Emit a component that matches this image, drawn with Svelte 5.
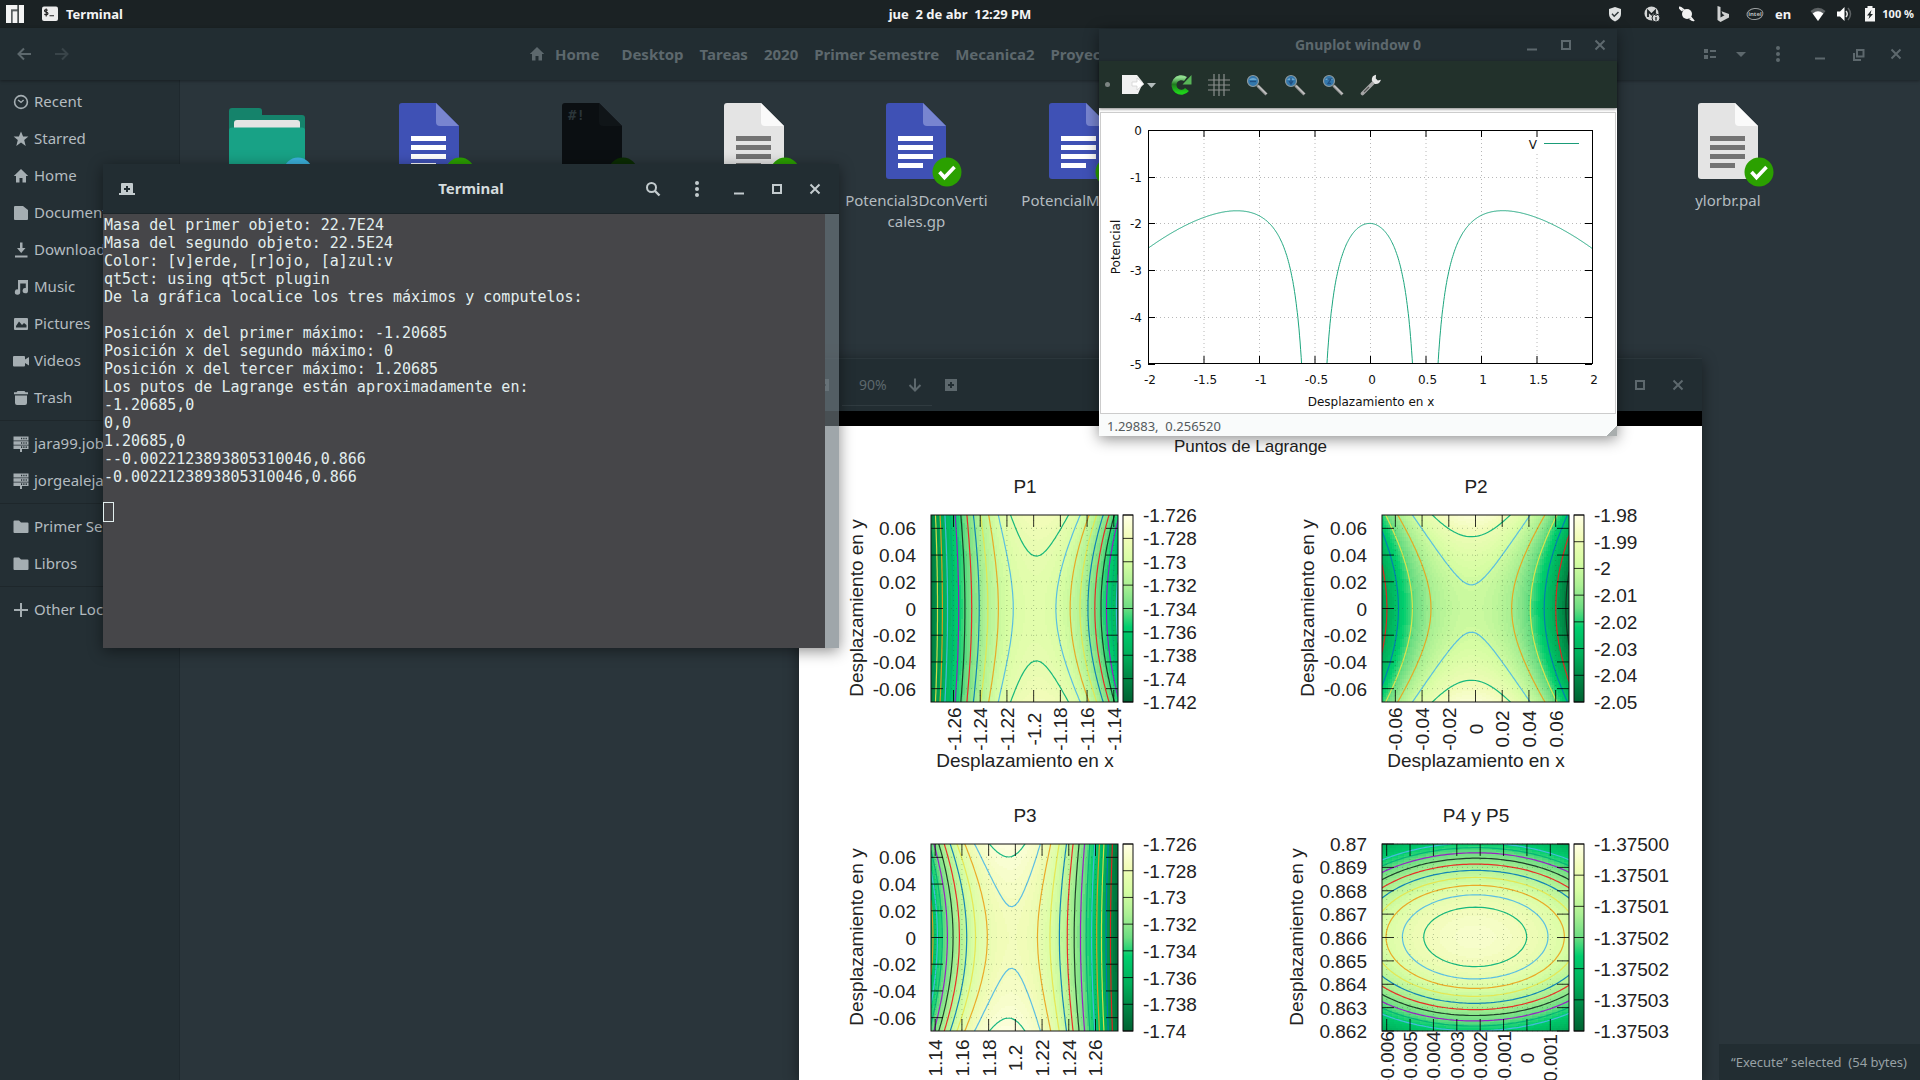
<script>
  const crumbs = ['Desktop', 'Tareas', '2020', 'Primer Semestre', 'Mecanica2', 'Proyecto'];

  const places = [
    [
      { icon: 'clock', name: 'Recent' },
      { icon: 'star', name: 'Starred' },
      { icon: 'home', name: 'Home' },
      { icon: 'document', name: 'Documents' },
      { icon: 'download', name: 'Downloads' },
      { icon: 'music', name: 'Music' },
      { icon: 'picture', name: 'Pictures' },
      { icon: 'video', name: 'Videos' },
      { icon: 'trash', name: 'Trash' }
    ],
    [
      { icon: 'server', name: 'jara99.job' },
      { icon: 'server', name: 'jorgealejandro' }
    ],
    [
      { icon: 'folder', name: 'Primer Semestre' },
      { icon: 'folder', name: 'Libros' }
    ],
    [{ icon: 'plus', name: 'Other Locations' }]
  ];

  const files = [
    { kind: 'folder', name: '' },
    { kind: 'blue', name: '' },
    { kind: 'script', name: '' },
    { kind: 'white', name: '' },
    { kind: 'blue', name: 'Potencial3DconVerticales.gp' },
    { kind: 'blue', name: 'PotencialMat.gp' },
    { kind: 'white', name: 'ylorbr.pal', last: true }
  ];

  const output = `Masa del primer objeto: 22.7E24
Masa del segundo objeto: 22.5E24
Color: [v]erde, [r]ojo, [a]zul:v
qt5ct: using qt5ct plugin
De la gráfica localice los tres máximos y computelos:

Posición x del primer máximo: -1.20685
Posición x del segundo máximo: 0
Posición x del tercer máximo: 1.20685
Los putos de Lagrange están aproximadamente en:
-1.20685,0
0,0
1.20685,0
--0.0022123893805310046,0.866
-0.0022123893805310046,0.866
`;

  // Effective potential of the rotating two-body system.
  const mu = 0.5022124;
  function potential(x, y) {
    const r1 = Math.hypot(x + mu, y);
    const r2 = Math.hypot(x - 1 + mu, y);
    return -(1 - mu) / r1 - mu / r2 - (x * x + y * y) / 2;
  }

  // One-dimensional plot: 111 px per unit in x, 46.7 px per unit in y.
  const px = (x) => 48 + (x + 2) * 111;
  const py = (v) => 17 - v * 46.7;
  let curve = '';
  let pen = false;
  for (let i = 0; i <= 800; i++) {
    const x = -2 + i / 200;
    const v = potential(x, 0);
    if (v > -6) {
      curve += `${pen ? 'L' : 'M'}${px(x).toFixed(1)} ${py(v).toFixed(1)}`;
      pen = true;
    } else pen = false;
  }
  const xTicks = [-2, -1.5, -1, -0.5, 0, 0.5, 1, 1.5, 2];
  const yTicks = [0, -1, -2, -3, -4, -5];

  // Colour ramp of the maps, from high to low potential.
  const ramp = [
    [0, 255, 255, 229],
    [0.125, 241, 252, 184],
    [0.25, 214, 253, 163],
    [0.375, 172, 240, 148],
    [0.5, 108, 221, 130],
    [0.6, 0, 206, 110],
    [0.75, 0, 175, 90],
    [0.875, 0, 133, 68],
    [1, 0, 98, 50]
  ];
  function shade(t) {
    t = Math.max(0, Math.min(1, t));
    let i = 1;
    while (i < ramp.length - 1 && ramp[i][0] < t) i++;
    const a = ramp[i - 1];
    const b = ramp[i];
    const k = (t - a[0]) / (b[0] - a[0]);
    return `rgb(${[1, 2, 3].map((c) => Math.round(a[c] + (b[c] - a[c]) * k)).join(',')})`;
  }
  const stops = ramp.map(([o]) => ({ o, c: shade(o) }));

  const SIZE = 187;
  const lineColors = ['#00b078', '#4db8e8', '#eba11a', '#e8e44a', '#0079b8', '#f01c1c', '#153020', '#9b10c8'];

  // Row runs of equal shade, one path per shade.
  function heat(m) {
    const cell = 2;
    const shades = 56;
    const paths = Array(shades + 1).fill('');
    for (let j = 0; j < SIZE; j += cell) {
      let start = 0;
      let last = -1;
      for (let i = 0; i <= SIZE + 1; i += cell) {
        const x = m.x0 + ((i + 1) / SIZE) * m.span;
        const y = m.y0 + m.span * (1 - (j + 1) / SIZE);
        const t = (m.hi - potential(x, y)) / (m.hi - m.lo);
        const q = i >= SIZE ? -2 : Math.round(Math.max(0, Math.min(1, t)) * shades);
        if (q !== last) {
          if (last >= 0) paths[last] += `M${start} ${j}H${Math.min(i, SIZE)}V${Math.min(j + cell, SIZE)}H${start}Z`;
          start = i;
          last = q;
        }
      }
    }
    return paths.map((d, q) => ({ d, c: shade(q / shades) })).filter((p) => p.d);
  }

  // Marching squares on a regular grid.
  function isoline(m, level) {
    const n = 60;
    const h = SIZE / n;
    const v = [];
    for (let j = 0; j <= n; j++) {
      v.push([]);
      for (let i = 0; i <= n; i++) v[j].push(potential(m.x0 + (i / n) * m.span, m.y0 + m.span * (1 - j / n)) - level);
    }
    let d = '';
    for (let j = 0; j < n; j++)
      for (let i = 0; i < n; i++) {
        const a = v[j][i], b = v[j][i + 1], c = v[j + 1][i + 1], e = v[j + 1][i];
        const pts = [];
        if (a > 0 !== b > 0) pts.push([i + a / (a - b), j]);
        if (b > 0 !== c > 0) pts.push([i + 1, j + b / (b - c)]);
        if (e > 0 !== c > 0) pts.push([i + e / (e - c), j + 1]);
        if (a > 0 !== e > 0) pts.push([i, j + a / (a - e)]);
        for (let k = 0; k + 1 < pts.length; k += 2)
          d += `M${(pts[k][0] * h).toFixed(1)} ${(pts[k][1] * h).toFixed(1)}L${(pts[k + 1][0] * h).toFixed(1)} ${(pts[k + 1][1] * h).toFixed(1)}`;
      }
    return d;
  }

  function build(m) {
    const base = potential(m.cx, m.cy);
    const lines = [];
    for (let k = 0; k < m.count; k++) {
      const d = isoline(m, base + m.first - k * m.step);
      if (d) lines.push({ d, c: lineColors[k % 8] });
    }
    return {
      ...m,
      cells: heat(m),
      lines,
      xt: m.xl.map(([v, label]) => ({ p: ((v - m.x0) / m.span) * SIZE, label })),
      yt: m.yl.map(([v, label]) => ({ p: SIZE - ((v - m.y0) / m.span) * SIZE, label })),
      ct: m.bar.map((label, i) => ({ p: (i / (m.bar.length - 1)) * SIZE, label }))
    };
  }

  const sym = [0.06, 0.04, 0.02, 0, -0.02, -0.04, -0.06].map((v) => [v, v === 0 ? '0' : v.toFixed(2)]);
  const maps = [
    build({
      title: 'P1', x0: -1.27685, y0: -0.07, span: 0.14, hi: -1.726, lo: -1.742,
      cx: -1.197, cy: 0, first: 0.00045, step: 0.00097, count: 12, ylabelX: -68, yl: sym,
      xl: [[-1.26, '-1.26'], [-1.24, '-1.24'], [-1.22, '-1.22'], [-1.2, '-1.2'], [-1.18, '-1.18'], [-1.16, '-1.16'], [-1.14, '-1.14']],
      bar: ['-1.726', '-1.728', '-1.73', '-1.732', '-1.734', '-1.736', '-1.738', '-1.74', '-1.742']
    }),
    build({
      title: 'P2', x0: -0.07, y0: -0.07, span: 0.14, hi: -1.98, lo: -2.05,
      cx: -0.0033, cy: 0, first: 0.01, step: 0.0089, count: 7, ylabelX: -68, yl: sym,
      xl: [...sym].reverse(),
      bar: ['-1.98', '-1.99', '-2', '-2.01', '-2.02', '-2.03', '-2.04', '-2.05']
    }),
    build({
      title: 'P3', x0: 1.13685, y0: -0.07, span: 0.14, hi: -1.726, lo: -1.74,
      cx: 1.198, cy: 0, first: 0.00103, step: 0.00088, count: 14, ylabelX: -68, yl: sym,
      xl: [[1.14, '1.14'], [1.16, '1.16'], [1.18, '1.18'], [1.2, '1.2'], [1.22, '1.22'], [1.24, '1.24'], [1.26, '1.26']],
      bar: ['-1.726', '-1.728', '-1.73', '-1.732', '-1.734', '-1.736', '-1.738', '-1.74']
    }),
    build({
      title: 'P4 y P5', x0: -0.0062, y0: 0.862, span: 0.008, hi: -1.375, lo: -1.375034,
      cx: -0.0022124, cy: 0.8660254, first: -0.00000182, step: 0.00000182, count: 10, ylabelX: -79,
      yl: [0.87, 0.869, 0.868, 0.867, 0.866, 0.865, 0.864, 0.863, 0.862].map((v) => [v, String(v)]),
      xl: [-0.006, -0.005, -0.004, -0.003, -0.002, -0.001, 0, 0.001].map((v) => [v, String(v)]),
      bar: ['-1.37500', '-1.37501', '-1.37501', '-1.37502', '-1.37502', '-1.37503', '-1.37503']
    })
  ];
</script>

{#snippet glyph(name)}
  <svg class="glyph" viewBox="0 0 16 16" aria-hidden="true">
    {#if name === 'clock'}
      <circle cx="8" cy="8" r="6.4" fill="none" stroke="currentColor" stroke-width="1.6" />
      <path d="M5 6l3 2.4L10.6 6" fill="none" stroke="currentColor" stroke-width="1.4" />
    {:else if name === 'star'}
      <path d="M8 .6l2.1 5h5.3l-4.2 3.5 1.5 5.9L8 11.6 3.300 15l1.500-5.900L.6 5.600h5.300z" />
    {:else if name === 'home'}
      <path d="M8 1L.8 8H3v6.500h3.500V10h3v4.500H13V8h2.200z" />
    {:else if name === 'document'}
      <path d="M2 1h8l5 4v9a1 1 0 0 1-1 1H2a1 1 0 0 1-1-1V2a1 1 0 0 1 1-1z" />
    {:else if name === 'download'}
      <path d="M7 .5h2.500V6h3L8.200 11 4 6h3zM2 13.500h12.500v2H2z" />
    {:else if name === 'music'}
      <path d="M5 1h10v10.500A2.700 2.700 0 1 1 12.800 9V4.500H7.200V13A2.700 2.700 0 1 1 5 10.400z" />
    {:else if name === 'picture'}
      <path fill-rule="evenodd" d="M2 2h12a1 1 0 0 1 1 1v10a1 1 0 0 1-1 1H2a1 1 0 0 1-1-1V3a1 1 0 0 1 1-1zm1 9.500h10.500V9L11 7 9 9 6 5.500 3 10z" />
    {:else if name === 'video'}
      <path d="M1 3h10a1 1 0 0 1 1 1v2.500L16 4v8.500L12 10v2.500a1 1 0 0 1-1 1H1a1 1 0 0 1-1-1V4a1 1 0 0 1 1-1z" />
    {:else if name === 'trash'}
      <path d="M4.500 1h7l1 1.200H15v2H1v-2h2.500zM2 5.500h12V13a2 2 0 0 1-2 2H4a2 2 0 0 1-2-2z" />
    {:else if name === 'server'}
      <path d="M.5 .5h15v4H.5zM.5 5.200h15v3.600H.5zM.5 9.500h15v3.500H9v3H7v-3H.5z" />
      <path d="M8 2.500h1.200M10.300 2.500h1.200M12.600 2.500h1.200M8 7h1.200M10.300 7h1.200M12.600 7h1.200M8 11.200h1.200M10.300 11.200h1.200M12.600 11.200h1.200" stroke="#242f34" stroke-width="1.700" />
    {:else if name === 'folder'}
      <path d="M1.500 1.500H6L8 3.500h6.500a1 1 0 0 1 1 1V13a1 1 0 0 1-1 1h-13a1 1 0 0 1-1-1V2.500a1 1 0 0 1 1-1z" />
    {:else if name === 'plus'}
      <path d="M7 1h2v6h6v2H9v6H7V9H1V7h6z" />
    {:else if name === 'back'}
      <path d="M8 2.500L2.500 8 8 13.500M3 8h12" fill="none" stroke="currentColor" stroke-width="2" />
    {:else if name === 'forward'}
      <path d="M8 2.500L13.500 8 8 13.500M13 8H1" fill="none" stroke="currentColor" stroke-width="2" />
    {:else if name === 'down'}
      <path d="M2.500 8L8 13.500 13.500 8M8 13V1.500" fill="none" stroke="currentColor" stroke-width="2" />
    {:else if name === 'minimize'}
      <path d="M3 11.500h10v2H3z" />
    {:else if name === 'maximize'}
      <path d="M4 4h8v8H4z" fill="none" stroke="currentColor" stroke-width="2" />
    {:else if name === 'restore'}
      <path d="M7 4h6.500v6.500H7zM4 7v7h7" fill="none" stroke="currentColor" stroke-width="2" />
    {:else if name === 'close'}
      <path d="M3.500 3.500l9 9M12.500 3.500l-9 9" fill="none" stroke="currentColor" stroke-width="2" />
    {:else if name === 'dots'}
      <circle cx="8" cy="2" r="2" /><circle cx="8" cy="8" r="2" /><circle cx="8" cy="14" r="2" />
    {:else if name === 'triangle'}
      <path d="M3 6h10L8 11z" />
    {:else if name === 'list'}
      <path d="M2 3h4v4H2zM2 9h4v4H2zM8 4h6v2H8zM8 10h6v2H8z" />
    {:else if name === 'search'}
      <circle cx="6.500" cy="6.500" r="4.500" fill="none" stroke="currentColor" stroke-width="2" />
      <path d="M10 10l4.500 4.500" stroke="currentColor" stroke-width="2.400" />
    {:else if name === 'newtab'}
      <path fill-rule="evenodd" d="M3 2h10a1 1 0 0 1 1 1v9h2v2H0v-2h2V3a1 1 0 0 1 1-1zm4 3v2H5v2h2v2h2V9h2V7H9V5z" />
    {:else if name === 'zoomin'}
      <path fill-rule="evenodd" d="M2 2h12v12H2zm5 3v2H5v2h2v2h2V9h2V7H9V5z" />
    {:else if name === 'zoomout'}
      <path fill-rule="evenodd" d="M2 2h12v12H2zm3 5v2h6V7z" />
    {/if}
  </svg>
{/snippet}

{#snippet button(name, label)}
  <button type="button" aria-label={label}>{@render glyph(name)}</button>
{/snippet}

<div class="desktop">
  <header class="panel">
    <div class="panel-left">
      <svg class="manjaro" viewBox="0 0 18 18" aria-hidden="true">
        <path d="M0 0h11.500v4.500H5V18H0zM6.500 6.200h5V18h-5zM13 0h5v18h-5z" fill="#f4f4f4" />
        <path d="M5 5h6.500v1H6v12H5zM11.700 0h1v18h-1z" fill="#5a6062" />
      </svg>
      <svg class="termicon" viewBox="0 0 16 16" aria-hidden="true">
        <rect y=".5" width="16" height="14.500" rx="2" fill="#ececec" />
        <path d="M5.800 4.200Q2.500 3.200 2.500 4.800 2.500 5.800 4.200 6.100 6 6.500 6 7.600 6 9.200 2.300 8.400M4.200 2.400v8M7.500 9.800h4.500" stroke="#222" stroke-width="1.100" fill="none" />
      </svg>
      <strong>Terminal</strong>
    </div>
    <strong class="clock">jue&nbsp; 2 de abr&nbsp; 12:29 PM</strong>
    <div class="tray">
      <svg class="shield" viewBox="0 0 16 16"><path d="M8 1l6 2v5q0 5-6 7.500Q2 13 2 8V3z" fill="#dfe2e2" /><path d="M5 7.800l2.200 2.400L11.500 6" stroke="#30383a" stroke-width="1.500" fill="none" /></svg>
      <svg class="mega" viewBox="0 0 16 16"><circle cx="7.500" cy="7.500" r="7" fill="#d4d6d6" /><path d="M4 11V5l3.500 3.500L11 5v3" stroke="#1b2224" stroke-width="1.800" fill="none" /><circle cx="12" cy="12" r="4" fill="#d4d6d6" stroke="#1b2224" /><path d="M12 11v3.500M12 9v1" stroke="#1b2224" stroke-width="1.300" /></svg>
      <svg class="planet" viewBox="0 0 16 16"><circle cx="8" cy="8" r="5" fill="#f2f2f2" /><path d="M3.500 5Q-.5 1.500 .8 1.200 3 1.500 8 7t6.500 7.500q-1 .5-4-2" fill="none" stroke="#f2f2f2" stroke-width="1.600" /></svg>
      <svg class="bing" viewBox="0 0 16 16"><path d="M2.500 0l3 1v10.500l4-2.300L7.500 8 6.500 5.200 14 8v3.500L5.500 16l-3-2z" fill="#cfd1d1" /></svg>
      <svg class="intel" viewBox="0 0 18 14"><ellipse cx="9" cy="7" rx="8" ry="5.500" transform="rotate(-8 9 7)" fill="none" stroke="#9a9e9f" /><text x="9" y="9" text-anchor="middle" font-size="6" font-weight="700" fill="#b9bcbd">intel</text></svg>
      <strong class="lang">en</strong>
      <svg class="wifi" viewBox="0 0 16 16"><path d="M8 15L.5 5Q8-1.500 15.500 5z" fill="#5c6163" /><path d="M8 15L2.700 7.500Q8 3 13.300 7.500z" fill="#fff" /></svg>
      <svg class="volume" viewBox="0 0 16 16"><path d="M1 5.500h3L8.500 1v14L4 10.500H1z" fill="#fff" /><path d="M10 5q2.500 3 0 6" stroke="#ddd" stroke-width="1.500" fill="none" /><path d="M12 2q5 6 0 12" stroke="#5c6163" stroke-width="1.500" fill="none" /></svg>
      <svg class="battery" viewBox="0 0 12 16"><path d="M3.500 0h5v2H11v13.500H1V2h2.500z" fill="#f4f4f4" /><path d="M7.500 4L3 9.500h2.500L4.500 13 9 8H6.500z" fill="#1b2224" /></svg>
      <strong class="percent">100 %</strong>
    </div>
  </header>

  <main class="files">
    <header class="bar">
      <div class="nav">
        {@render button('back', 'Back')}
        <span class="faint">{@render button('forward', 'Forward')}</span>
      </div>
      <nav class="crumbs" aria-label="Path">
        <a class="crumb-home" href="#home">{@render glyph('home')}Home</a>
        {#each crumbs as c}<a href="#{c}">{c}</a>{/each}
      </nav>
      <div class="tools">
        {@render button('list', 'View')}
        {@render button('triangle', 'View options')}
        <span class="menu">{@render button('dots', 'Menu')}</span>
      </div>
      <div class="controls">
        {@render button('minimize', 'Minimize')}
        {@render button('restore', 'Restore')}
        {@render button('close', 'Close')}
      </div>
    </header>
    <div class="split">
      <nav class="sidebar" aria-label="Places">
        {#each places as group}
          <ul>
            {#each group as p}
              <li><a href="#{p.name}">{@render glyph(p.icon)}<span>{p.name}</span></a></li>
            {/each}
          </ul>
        {/each}
      </nav>
      <section class="content">
        <ul class="grid">
          {#each files as f}
            <li class:last={f.last}>
              <span class="thumb">
                {#if f.kind === 'folder'}
                  <svg class="folder" viewBox="0 0 76 76" aria-hidden="true">
                    <path d="M3 5h27q3 0 3 3v4h40q3 0 3 3v50H0V8q0-3 3-3z" fill="#15836b" />
                    <path d="M5 40V20q0-3 3-3h60q3 0 3 3v20z" fill="#e4e4e4" />
                    <path d="M3 24.500h70q3 0 3 3V70q0 3-3 3H3q-3 0-3-3V27.500q0-3 3-3z" fill="#18a286" />
                  </svg>
                {:else}
                  <svg class="doc {f.kind}" viewBox="0 0 60 76" aria-hidden="true">
                    <path class="sheet" d="M3 0h34l23 23v50q0 3-3 3H3q-3 0-3-3V3q0-3 3-3z" />
                    <path class="fold" d="M37 0l23 23H41q-4 0-4-4z" />
                    {#if f.kind === 'script'}
                      <text x="6" y="17" font-size="14">#!</text>
                    {:else}
                      <path class="rows" d="M12 33h35v5H12zM12 42h35v5H12zM12 51h35v5H12zM12 60h25v5H12z" />
                    {/if}
                  </svg>
                {/if}
                <svg class="emblem {f.kind}" viewBox="0 0 30 30" aria-hidden="true">
                  <circle cx="15" cy="15" r="14.500" />
                  <path d="M7.500 15l5 5.500L22.500 10" fill="none" stroke="#fff" stroke-width="3.600" />
                </svg>
              </span>
              <span class="name">{f.name}</span>
            </li>
          {/each}
        </ul>
        <p class="status">“Execute” selected&nbsp; (54 bytes)</p>
      </section>
    </div>
  </main>

  <section class="window viewer" aria-label="Document viewer">
    <header class="viewer-bar">
      <div class="zoom">
        {@render button('zoomout', 'Zoom out')}
        <span class="level"><input type="text" value="90%" aria-label="Zoom level" />{@render button('down', 'Zoom levels')}</span>
        {@render button('zoomin', 'Zoom in')}
      </div>
      <div class="controls">
        {@render button('minimize', 'Minimize')}
        {@render button('maximize', 'Maximize')}
        {@render button('close', 'Close')}
      </div>
    </header>
    <div class="page">
      <h2>Puntos de Lagrange</h2>
      <div class="plots">
        {#each maps as m, n}
          <svg class="map" viewBox="0 0 451 329" role="img" aria-label={m.title}>
            <defs>
              <linearGradient id="ramp{n}" x1="0" y1="0" x2="0" y2="1">
                {#each stops as s}<stop offset={s.o} stop-color={s.c} />{/each}
              </linearGradient>
              <clipPath id="clip{n}"><rect width={SIZE} height={SIZE} /></clipPath>
            </defs>
            <g transform="translate(132 52)">
              <text x="94" y="-22" text-anchor="middle">{m.title}</text>
              <g shape-rendering="crispEdges">
                {#each m.cells as c}<path d={c.d} fill={c.c} />{/each}
              </g>
              <g clip-path="url(#clip{n})" class="iso">
                {#each m.lines as l}<path d={l.d} stroke={l.c} />{/each}
              </g>
              {#each m.xt as t}
                <path class="dotted" d="M{t.p} 0V{SIZE}" />
                <path class="tick" d="M{t.p} 0v12M{t.p} {SIZE}v-12" />
                <text transform="translate({t.p + 7} {SIZE + 27}) rotate(-90)" text-anchor="middle">{t.label}</text>
              {/each}
              {#each m.yt as t}
                <path class="dotted" d="M0 {t.p}H{SIZE}" />
                <path class="tick" d="M0 {t.p}h12M{SIZE} {t.p}h-12" />
                <text x="-15" y={t.p + 7} text-anchor="end">{t.label}</text>
              {/each}
              <rect class="frame" width={SIZE} height={SIZE} />
              <rect class="frame" x="192" width="10" height={SIZE} style:fill="url(#ramp{n})" />
              {#each m.ct as t}
                <path class="tick" d="M192 {t.p}h10" />
                <text x="212" y={t.p + 7}>{t.label}</text>
              {/each}
              <text x="94" y="252" text-anchor="middle">Desplazamiento en x</text>
              <text transform="translate({m.ylabelX} 93) rotate(-90)" text-anchor="middle">Desplazamiento en y</text>
            </g>
          </svg>
        {/each}
      </div>
    </div>
  </section>

  <section class="window gnuplot" aria-label="Gnuplot">
    <header class="gnu-bar">
      <h1>Gnuplot window 0</h1>
      <div class="controls">
        {@render button('minimize', 'Minimize')}
        {@render button('maximize', 'Maximize')}
        {@render button('close', 'Close')}
      </div>
    </header>
    <div class="toolbar">
      <i class="handle"></i>
      <button type="button" class="export" aria-label="Export">
        <svg viewBox="0 0 34 22" aria-hidden="true"><path d="M0 1h15l6 7.500L16 20H0z" fill="#f1f1f1" /><path d="M10 8h5V4l7 6-7 6v-4h-5z" fill="#fff" stroke="#cfcfcf" stroke-width=".7" /><path d="M25 9h9l-4.500 5z" fill="#b4bcbc" /></svg>
      </button>
      <button type="button" aria-label="Replot">
        <svg viewBox="0 0 22 22" aria-hidden="true">
          <defs><linearGradient id="leaf" x1="0" y1="0" x2="0" y2="1"><stop offset="0" stop-color="#8fdc8f" /><stop offset=".45" stop-color="#1e7a1e" /><stop offset="1" stop-color="#1fd01a" /></linearGradient></defs>
          <path d="M17 15.500A7.300 7.300 0 1 1 15.500 5" fill="none" stroke="url(#leaf)" stroke-width="5" /><path d="M21.500 1v9.500h-9z" fill="#58b558" />
        </svg>
      </button>
      <button type="button" aria-label="Grid">
        <svg viewBox="0 0 22 22" aria-hidden="true"><path d="M6 0v22M11 0v22M16 0v22M0 6h22M0 11h22M0 16h22" stroke="#8b908e" stroke-width="1.200" /></svg>
      </button>
      {#each ['Previous zoom', 'Next zoom', 'Autoscale'] as label, i}
        <button type="button" aria-label={label}>
          <svg viewBox="0 0 22 22" aria-hidden="true">
            <path d="M11.500 11.500l9 9" stroke="#9b9b9b" stroke-width="3" /><path d="M12 11.500l8.500 8.500" stroke="#ddd" />
            <circle cx="7" cy="7" r="5.500" fill="#3478ac" stroke="#8d999d" stroke-width="1.200" />
            <path d="M3 6a4.500 3.500 0 0 1 8 0z" fill="#6ba6cf" />
            <path d={['M4 7.500h6', 'M7 4v6M5 7l2 3 2-3', 'M5.500 5h3.500L6 9.500h3'][i]} stroke="#1f4f80" stroke-width="1.300" fill="none" />
          </svg>
        </button>
      {/each}
      <button type="button" aria-label="Options">
        <svg viewBox="0 0 22 22" aria-hidden="true"><path d="M2.500 19.500L14 8" stroke="#a6a6a6" stroke-width="3.600" stroke-linecap="round" /><path d="M4 18l5-5" stroke="#555" stroke-width="1.200" /><path d="M16 .8q-4.500.8-4.200 5.700L15 10q4.500.5 6-4.200l-3.200.8-2-2z" fill="#e6e6e6" /></svg>
      </button>
    </div>
    <div class="canvas">
      <svg viewBox="1 0 514 300" role="img" aria-label="Potencial">
        <defs><clipPath id="plot-area"><rect x="48" y="17" width="445" height="234" /></clipPath></defs>
        {#each xTicks as t}
          {#if Math.abs(t) < 2}<path class="gdot" d="M{px(t) + 0.5} {t === 1.5 ? 41 : 18}V250" />{/if}
          <path class="gtick" d="M{px(t) + 0.5} 17v7M{px(t) + 0.5} 250v-7" />
          <text x={px(t) + 2} y="271" text-anchor="middle">{t}</text>
        {/each}
        {#each yTicks as t}
          {#if t < 0 && t > -5}<path class="gdot" d="M48 {Math.round(py(t)) + 0.5}H492" />{/if}
          <path class="gtick" d="M48 {Math.round(py(t)) + 0.5}h7M492 {Math.round(py(t)) + 0.5}h-7" />
          <text x="42" y={Math.round(py(t)) + 5} text-anchor="end">{t}</text>
        {/each}
        <path d={curve} clip-path="url(#plot-area)" fill="none" stroke="#1da67e" />
        <rect class="gframe" x="48.500" y="17.500" width="444" height="233" />
        <text x="437" y="36" text-anchor="end">V</text>
        <path d="M444 30.500h35" stroke="#1a9c78" />
        <text x="271" y="293" text-anchor="middle">Desplazamiento en x</text>
        <text transform="translate(20 134) rotate(-90)" text-anchor="middle">Potencial</text>
      </svg>
    </div>
    <footer>1.29883,&nbsp; 0.256520</footer>
  </section>

  <section class="window terminal" aria-label="Terminal">
    <header class="term-bar">
      <div class="side">{@render button('newtab', 'New tab')}</div>
      <h1>Terminal</h1>
      <div class="side right">
        {@render button('search', 'Search')}
        {@render button('dots', 'Menu')}
        <div class="controls">
          {@render button('minimize', 'Minimize')}
          {@render button('maximize', 'Maximize')}
          {@render button('close', 'Close')}
        </div>
      </div>
    </header>
    <div class="term-body">
      <div class="screen"><pre>{output}</pre><span class="cursor"></span></div>
      <div class="scroll"></div>
    </div>
  </section>
</div>

<style>
  :global(body) { margin: 0; background: #2a353b; }
  .desktop {
    position: relative;
    display: flex;
    flex-direction: column;
    height: 100vh;
    overflow: hidden;
    font: 15px/20px 'Noto Sans', sans-serif;
    color: #b4bcc0;
  }
  button { display: flex; padding: 0; border: 0; background: none; color: inherit; font: inherit; }
  a { color: inherit; text-decoration: none; }
  ul { margin: 0; padding: 0; list-style: none; }
  h1, h2, p, pre { margin: 0; font: inherit; }
  .glyph { display: block; width: 16px; height: 16px; fill: currentColor; flex: none; }
  .controls { display: flex; align-items: center; gap: 22px; }

  .panel {
    display: grid;
    grid-template-columns: 1fr auto 1fr;
    align-items: center;
    height: 28px;
    flex: none;
    padding: 0 6px;
    background: #1b2224;
    color: #f4f4f4;
    font-size: 13px;
  }
  .panel-left { display: flex; align-items: center; }
  .manjaro { width: 18px; height: 18px; margin-right: 18px; }
  .termicon { width: 16px; height: 16px; margin-right: 8px; }
  .tray { display: flex; align-items: center; justify-content: flex-end; }
  .tray svg { width: 16px; height: 16px; flex: none; }
  .shield { margin-right: 21px; }
  .mega { margin-right: 19px; }
  .planet { margin-right: 20px; }
  .bing { margin-right: 15px; }
  .tray .intel { width: 18px; height: 14px; margin-right: 11px; }
  .lang { margin-right: 19px; }
  .wifi { margin-right: 10px; }
  .volume { margin-right: 12px; }
  .tray .battery { width: 12px; margin-right: 6px; }
  .percent { font-size: 11px; }

  .files { display: flex; flex-direction: column; flex: 1; min-height: 0; isolation: isolate; }
  .bar {
    display: flex;
    align-items: center;
    height: 52px;
    flex: none;
    padding: 0 16px;
    background: #222d32;
    color: #5d686d;
    box-shadow: 0 1px 3px rgba(0, 0, 0, 0.35);
    z-index: 1;
  }
  .nav { display: flex; gap: 22px; width: 513px; flex: none; }
  .faint { opacity: 0.4; }
  .crumbs { display: flex; gap: 16px; flex: 1; min-width: 0; overflow: hidden; font-weight: 700; white-space: nowrap; }
  .crumb-home { display: flex; align-items: center; gap: 10px; margin-right: 6px; }
  .tools { display: flex; gap: 15px; margin-right: 26px; }
  .menu { padding-left: 6px; }
  .split { display: flex; flex: 1; min-height: 0; }
  .sidebar { width: 180px; box-sizing: border-box; flex: none; padding-top: 3px; background: #242f34; border-right: 1px solid #1f292e; }
  .sidebar ul + ul { margin-top: 4px; padding-top: 4px; border-top: 1px solid #1e272b; }
  .sidebar a { display: flex; align-items: center; gap: 5px; height: 37px; padding-left: 13px; white-space: nowrap; font-size: 15px; }
  .sidebar span { padding-bottom: 1px; }
  .sidebar a .glyph { color: #a5aeb2; }
  .content { display: flex; flex-direction: column; justify-content: space-between; flex: 1; min-width: 0; background: #2a353b; }
  .grid { display: grid; grid-template-columns: repeat(10, 1fr); padding: 23px 111px 0 6px; }
  .grid li { display: flex; flex-direction: column; align-items: center; gap: 11px; min-width: 0; }
  .grid .last { grid-column: 10; }
  .thumb { position: relative; display: flex; width: 76px; height: 76px; justify-content: center; }
  .folder { width: 76px; height: 76px; }
  .doc { width: 60px; height: 76px; }
  .blue .sheet { fill: #3f51b5; }
  .blue .fold { fill: #7885d0; }
  .blue .rows { fill: #fff; }
  .white .sheet { fill: #e4e4e4; }
  .white .fold { fill: #fafafa; }
  .white .rows { fill: #737373; }
  .script .sheet { fill: #0b0f12; }
  .script .fold { fill: #101518; }
  .doc text { fill: #2a3539; font-family: 'DejaVu Sans Mono', monospace; font-weight: 700; }
  .emblem { position: absolute; right: -8px; bottom: -8px; width: 30px; height: 30px; fill: #2ba000; }
  .emblem.folder { width: 30px; height: 30px; fill: #3cb2dd; }
  .emblem.script { fill: #0b2c03; }
  .name { width: 144px; text-align: center; line-height: 21px; font-size: 15px; overflow-wrap: anywhere; }
  .status { align-self: flex-end; padding: 8px 13px 8px 12px; background: #222d32; font-size: 13px; color: #98a1a5; }

  .window { position: absolute; display: flex; flex-direction: column; box-shadow: 0 3px 14px rgba(0, 0, 0, 0.45); }
  .window h1 { font-weight: 700; }
  .window > header { display: flex; align-items: center; flex: none; background: #222d32; color: #5d686d; }

  .viewer { left: 799px; top: 358px; width: 903px; bottom: 0; overflow: hidden; border-top: 1px solid #2b363b; box-sizing: border-box; }
  .viewer .viewer-bar { justify-content: space-between; height: 52px; padding: 0 16px; }
  .zoom { display: flex; align-items: center; gap: 11px; }
  .level { display: flex; align-items: center; width: 90px; height: 40px; border-bottom: 1px solid #303b40; }
  .level input { width: 48px; margin: 0 0 0 17px; padding: 0; border: 0; background: none; color: inherit; font: inherit; font-size: 14px; }
  .page { flex: 1; min-height: 0; border-top: 15px solid #000; background: #fff; color: #222; font-family: 'Liberation Sans', sans-serif; }
  .page h2 { padding-top: 11px; height: 27px; box-sizing: border-box; margin-bottom: 10px; font-size: 17px; line-height: 20px; text-align: center; }
  .plots { display: grid; grid-template-columns: 451px 451px; }
  .map { display: block; width: 451px; height: 329px; font-size: 19px; fill: #222; }
  .iso path { fill: none; stroke-width: 1.2; stroke-linecap: round; opacity: 0.9; }
  .dotted { stroke: rgba(40, 70, 40, 0.3); stroke-dasharray: 1 4; }
  .tick { stroke: rgba(0, 0, 0, 0.8); }
  .frame { fill: none; stroke: #111; }

  .gnuplot { left: 1099px; top: 29px; width: 518px; background: #fff; }
  .gnuplot .gnu-bar { height: 32px; padding: 0 9px; }
  .gnu-bar h1 { flex: 1; padding-left: 84px; text-align: center; font-size: 14px; }
  .gnu-bar .controls { gap: 18px; }
  .toolbar { display: flex; align-items: center; gap: 16px; height: 47px; padding-left: 6px; background: #22312b; box-shadow: 0 1px 3px rgba(0, 0, 0, 0.5); }
  .toolbar svg { display: block; width: 22px; height: 22px; }
  .toolbar .export { margin-right: -2px; }
  .toolbar .export svg { width: 34px; }
  .handle { width: 5px; height: 5px; margin-right: -4px; border-radius: 50%; background: #7d8583; }
  .canvas { margin: 4px 1px 0; border: 1px solid #ccc; }
  .canvas svg { display: block; width: 100%; font: 12px 'DejaVu Sans', sans-serif; fill: #111; }
  .gdot { stroke: #b8b8b8; stroke-dasharray: 1 3; }
  .gtick { stroke: #000; }
  .gframe { fill: none; stroke: #000; }
  .gnuplot footer {
    height: 22px;
    padding-left: 8px;
    font-size: 13px;
    line-height: 24px;
    color: #545a5c;
    background: linear-gradient(135deg, transparent 50%, #a9aeae 50%) right bottom / 10px 10px no-repeat, #f9fbfb;
  }

  .terminal { left: 103px; top: 164px; width: 736px; height: 484px; }
  .terminal .term-bar { height: 50px; box-sizing: border-box; padding: 0 16px; border-bottom: 1px solid #1c2529; color: #c3cbce; }
  .side { display: flex; align-items: center; flex: 1; }
  .right { justify-content: flex-end; gap: 28px; }
  .right .controls { margin-left: -2px; }
  .term-bar h1 { padding-bottom: 2px; font-size: 15px; color: #d5dcde; }
  .term-body { display: flex; flex: 1; min-height: 0; }
  .screen { flex: 1; padding: 2px 1px 0; background: #464649; color: #e2eeee; }
  .screen pre { font: 15px/18px 'DejaVu Sans Mono', monospace; }
  .cursor { display: block; width: 9px; height: 18px; box-sizing: content-box; margin: 16px 0 0 -1px; border: 1px solid #e2eeee; }
  .scroll { width: 14px; background: rgba(109, 120, 126, 0.66); }
</style>
